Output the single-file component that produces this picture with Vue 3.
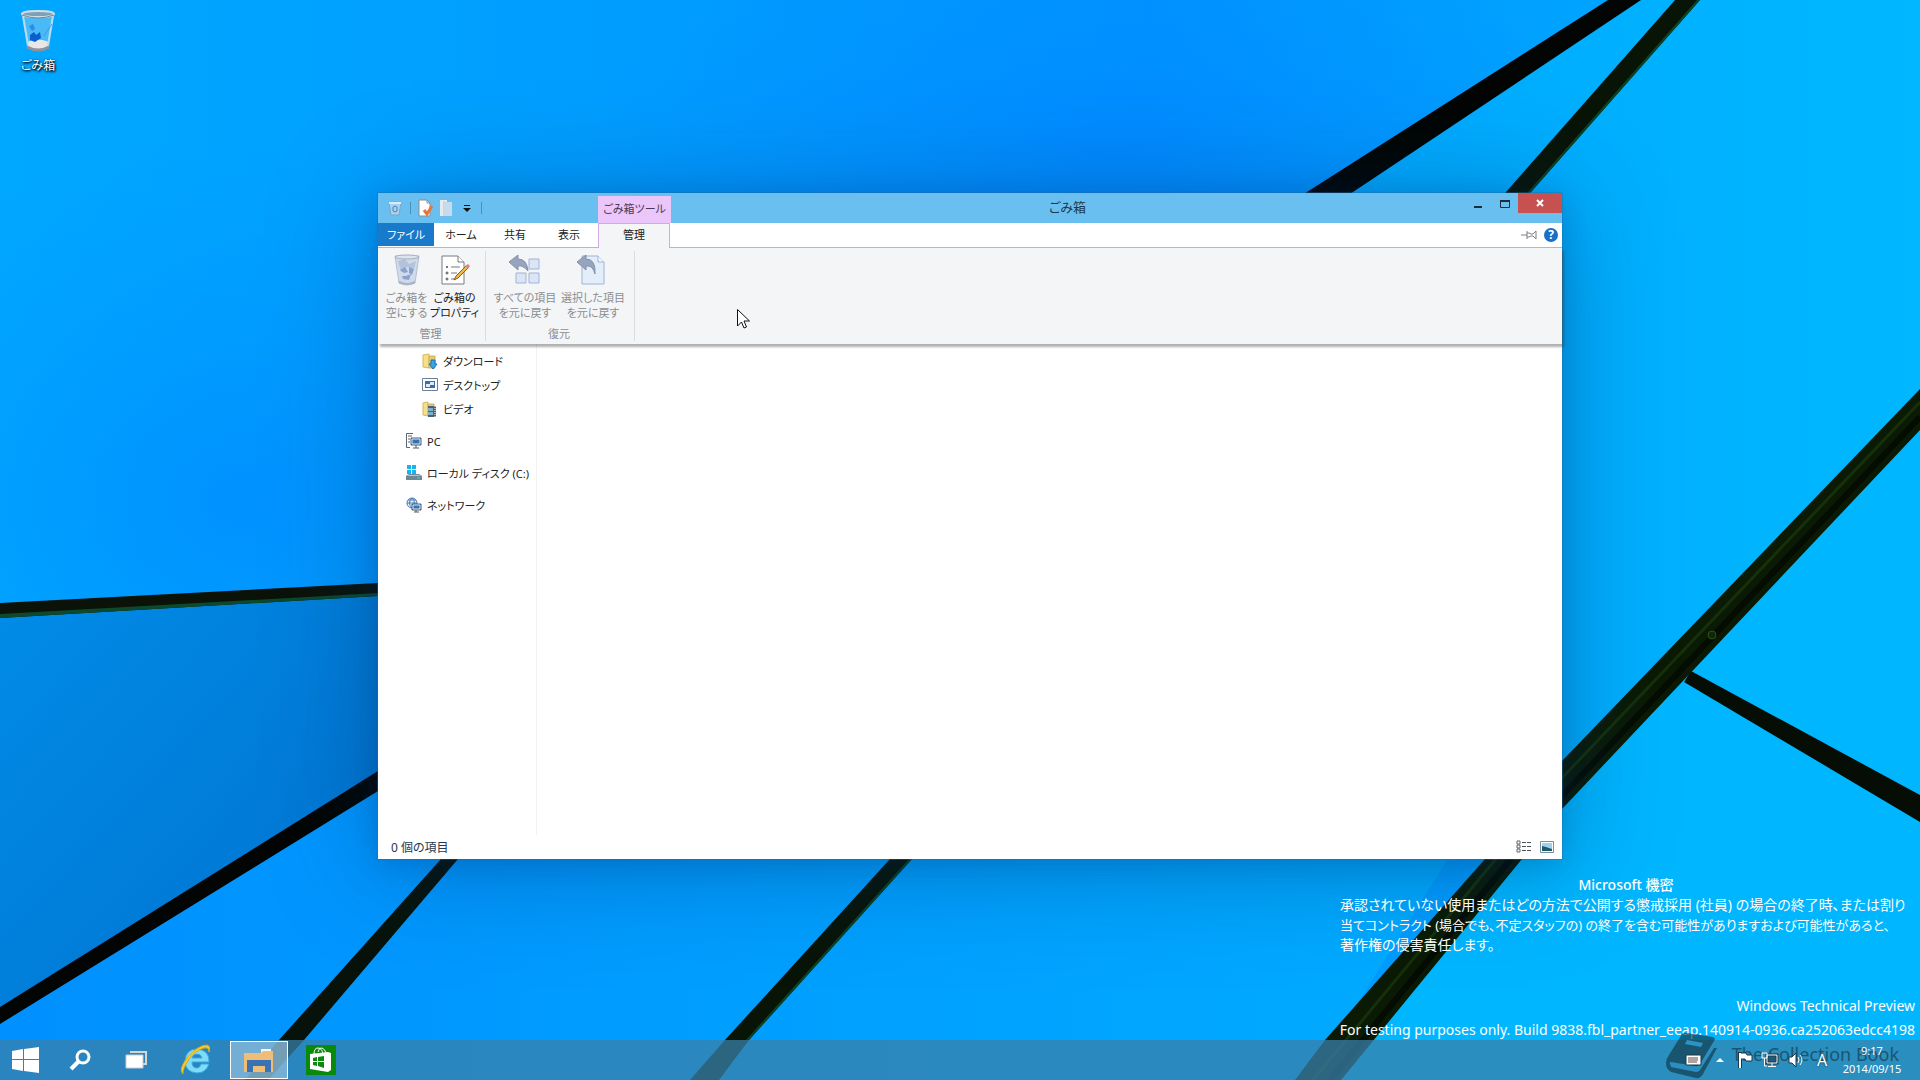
<script setup>
const tabs = ['ホーム', '共有', '表示']
const notice = [
  { text: '承認されていない使用またはどの方法で公開する懲戒採用 (社員) の場合の終了時、または割り' },
  { text: '当てコントラクト (場合でも、不定スタッフの) の終了を含む可能性がありますおよび可能性があると、', dense: true },
  { text: '著作権の侵害責任します。' },
]
</script>

<template>
  <div class="desktop">
    <svg class="wallpaper" viewBox="0 0 1920 1080" preserveAspectRatio="xMidYMid slice" aria-hidden="true">
      <defs>
        <linearGradient id="base" x1="0" y1="0" x2="1" y2="0">
          <stop offset="0" stop-color="#00a8ff" />
          <stop offset=".3" stop-color="#009eff" />
          <stop offset=".6" stop-color="#0092ff" />
          <stop offset=".78" stop-color="#00a0ff" />
          <stop offset="1" stop-color="#00b0ff" />
        </linearGradient>
        <linearGradient id="leftPane" x1="0" y1="0" x2="1" y2="1">
          <stop offset="0" stop-color="#008ce8" />
          <stop offset="1" stop-color="#0070cc" />
        </linearGradient>
        <linearGradient id="lowPane" x1="0" y1="0" x2="1" y2="0">
          <stop offset="0" stop-color="#0090ff" />
          <stop offset=".4" stop-color="#009cff" />
          <stop offset="1" stop-color="#00acff" />
        </linearGradient>
        <linearGradient id="rightPane" x1="0" y1="0" x2="1" y2="0">
          <stop offset="0" stop-color="#00a8ff" />
          <stop offset="1" stop-color="#00b8ff" />
        </linearGradient>
        <radialGradient id="glow">
          <stop offset="0" stop-color="#0086ff" stop-opacity=".6" />
          <stop offset="1" stop-color="#0090ff" stop-opacity="0" />
        </radialGradient>
      </defs>
      <rect width="1920" height="1080" fill="url(#base)" />
      <ellipse cx="1100" cy="150" rx="520" ry="220" fill="url(#glow)" />
      <ellipse cx="240" cy="500" rx="460" ry="360" fill="url(#glow)" />
      <path d="M0 610 400 590V775L0 1024Z" fill="url(#leftPane)" />
      <path d="M0 1024 400 775H1500L1310 1080H0Z" fill="url(#lowPane)" />
      <path d="M1625 0H1920V400L1500 860H1400L1320 193Z" fill="url(#rightPane)" />
      <path d="M1920 410V1080H1318L1580 770Z" fill="#00b6ff" />
      <path d="M0 603 378 583 400 582V595L378 596 0 618Z" fill="#0b1208" />
      <path d="M0 614 378 593V596L0 618Z" fill="#0b4a2c" />
      <path d="M1608 0H1641L1353 192 378 791 0 1024V1007L378 771 1307 192Z" fill="#020503" />
      <path d="M1675 0H1700L1531 192 912 859 749 1040 719 1080H690L725 1040 890 859 1506 192Z" fill="#081406" />
      <path d="M1697 0H1700L1531 192 912 859 749 1040H746L909 859 1528 192Z" fill="#0b4426" />
      <path d="M441 859 520 775H538L458 859 304 1040 268 1080H245L279 1040Z" fill="#07130a" />
      <path d="M1691 671 1920 795V822L1684 682Z" fill="#050d04" />
      <path d="M1920 389V430L1562 809 1522 859 1341 1080H1295L1325 1040 1485 859 1562 761Z" fill="#0a1a04" />
      <path d="M1920 402 1562 778 1495 860 1313 1080" fill="none" stroke="#16300a" stroke-width="3" />
      <path d="M1920 417 1562 796 1510 860 1330 1080" fill="none" stroke="#050c02" stroke-width="6" />
      <circle cx="1712" cy="635" r="4" fill="#102808" stroke="#2c5018" />
    </svg>

    <a class="bin" href="#bin">
      <svg width="40" height="46" viewBox="0 0 40 46" aria-hidden="true">
        <path d="M4 5 9 40q11 6 22 0l5-35Z" fill="#7cc6f2" fill-opacity=".6" />
        <path d="M9 34q11-5 22 0l-1 6q-10 5-20 0Z" fill="#e9e6ea" />
        <path d="M9 39q11 6 22 0" fill="none" stroke="#8d929d" stroke-width="3" />
        <path d="M5 8 10 37M35 8 30 37" stroke="#b7dcf4" stroke-width="2" />
        <path d="m11 18 4-2 2 5-3 2Z" fill="#2f8ae6" />
        <path d="m12 27 4-3 2 3 4-3 1 6-6 4-5-2Z" fill="#0a5fd0" />
        <path d="m26 28 8-12" stroke="#3f9be4" />
        <ellipse cx="20" cy="6" rx="16" ry="3" fill="#7d9fb8" stroke="#d4dde3" stroke-width="2" />
        <path d="M4 7q16 6 32 0" fill="none" stroke="#6f8796" />
      </svg>
      <span>ごみ箱</span>
    </a>

    <main class="stage">
      <section class="window">
        <header class="titlebar">
          <div class="quick">
            <svg width="16" height="16" viewBox="0 0 16 16" aria-hidden="true"><path d="m2 2 2 13h8l2-13Z" fill="#a8d2ee" stroke="#7ca6c4" /><path d="M2 3h12" stroke="#dcecf6" stroke-width="2" /><path d="M6 7q2-2 4 0v4q-2 2-4 0Z" fill="none" stroke="#3d83c4" /></svg>
            <i class="bar"></i>
            <button aria-label="プロパティ"><svg width="16" height="18" viewBox="0 0 16 18"><path d="M2 1h8l3 3v13H2Z" fill="#fff" stroke="#8a8f94" /><path d="M10 1v3h3" fill="none" stroke="#8a8f94" /><path d="m7 11 3 4 5-8" fill="none" stroke="#e8743c" stroke-width="3" /></svg></button>
            <button aria-label="新しいフォルダー"><svg width="14" height="18" viewBox="0 0 14 18"><path d="M1 1h7v16H1Z" fill="#e4eaf0" /><path d="M6 3h7v14H6Z" fill="#c4dcee" /><path d="M5 2v15" stroke="#b4c4d2" /></svg></button>
            <button aria-label="カスタマイズ"><svg width="8" height="8" viewBox="0 0 8 8"><path d="M1 1.500h6" stroke="#111" /><path d="M0 4h8L4 8Z" fill="#111" /></svg></button>
            <i class="bar"></i>
          </div>
          <div class="context">ごみ箱ツール</div>
          <h1>ごみ箱</h1>
          <div class="controls">
            <button aria-label="最小化"><svg width="10" height="10" viewBox="0 0 10 10"><path d="M1 8h8" stroke="#1c2c38" stroke-width="2" /></svg></button>
            <button aria-label="最大化"><svg width="10" height="10" viewBox="0 0 10 10"><path d="M0 2h10" stroke="#1c2c38" stroke-width="2" /><path d="M.5 1.500v7h9v-7" fill="none" stroke="#1c2c38" /></svg></button>
            <button class="close" aria-label="閉じる"><svg width="10" height="8" viewBox="0 0 10 8"><path d="m2 1 6 6M8 1 2 7" stroke="#fff" stroke-width="2" /></svg></button>
          </div>
        </header>

        <nav class="tabs">
          <button class="file">ファイル</button>
          <button v-for="t in tabs" :key="t" class="tab">{{ t }}</button>
          <button class="active">管理</button>
          <span class="grow"></span>
          <button class="tool" aria-label="リボンの固定"><svg width="16" height="10" viewBox="0 0 16 10"><path d="M0 5h6M6 1v8M6 3h2l2 1h2l3-3v8l-3-3h-2L8 7H6" fill="none" stroke="#7b7f84" /></svg></button>
          <button class="tool" aria-label="ヘルプ"><span class="help">?</span></button>
        </nav>

        <div class="ribbon">
          <div class="group manage">
            <div class="actions">
              <button class="off">
                <svg width="32" height="32" viewBox="0 0 32 32" aria-hidden="true"><path d="m4 2 4 27q8 4 16 0l4-27Z" fill="#cfdaea" stroke="#b4c0d2" /><path d="m7 7 7-2 4 5 7-3-2 8-7-2-6 5Z" fill="#b4c3dc" /><path d="m9 16 5-3 3 5-4 1ZM18 13l5 2-2 6-3-2ZM11 22l4 0 5-2-2 6-6-1Z" fill="#8ba2cc" /><ellipse cx="16" cy="3" rx="12" ry="2" fill="#dde4ee" stroke="#a3afc0" /><path d="M8 28q8 4 16 0" fill="none" stroke="#a9b4c6" stroke-width="2" /></svg>
                <span>ごみ箱を<br>空にする</span>
              </button>
              <button>
                <svg width="32" height="32" viewBox="0 0 32 32" aria-hidden="true"><path d="M3 2h16l6 6v22H3Z" fill="#fff" stroke="#777c82" /><path d="M19 2v6h6" fill="#fff" stroke="#777c82" /><path d="M12 13h9M12 19h6M12 25h5" stroke="#777c82" /><circle cx="8" cy="13" r="1" fill="#454b52" /><circle cx="8" cy="19" r="1" fill="none" stroke="#454b52" /><circle cx="8" cy="25" r="1" fill="none" stroke="#454b52" /><path d="m27 12-10 10-2 4 4-2 10-10Z" fill="#f4b63f" stroke="#8a6222" /><path d="m26 12 3-2 2 2-2 3Z" fill="#d98a7c" /></svg>
                <span>ごみ箱の<br>プロパティ</span>
              </button>
            </div>
            <p>管理</p>
          </div>
          <div class="group restore">
            <div class="actions">
              <button class="off">
                <svg width="32" height="32" viewBox="0 0 32 32" aria-hidden="true"><g fill="#dbe6f5" stroke="#9eb4d4"><path d="M20 5h10v10H20ZM7 19h10v10H7ZM20 19h10v10H20Z" /></g><path d="m0 8 9-7v4q9 0 10 12Q14 11 9 12v4Z" fill="#96a5bd" stroke="#8292aa" /></svg>
                <span>すべての項目<br>を元に戻す</span>
              </button>
              <button class="off">
                <svg width="32" height="32" viewBox="0 0 32 32" aria-hidden="true"><path d="M5 2h16l6 6v22H5Z" fill="#e4eefb" stroke="#9eb4d4" /><path d="M21 2v6h6" fill="#f4f8fd" stroke="#9eb4d4" /><path d="m0 8 9-7v4q10 0 9 15Q16 11 9 12v4Z" fill="#96a5bd" stroke="#8292aa" /></svg>
                <span>選択した項目<br>を元に戻す</span>
              </button>
            </div>
            <p>復元</p>
          </div>
        </div>

        <div class="body">
          <aside>
            <a class="sub" href="#downloads"><svg width="16" height="16" viewBox="0 0 16 16"><path d="M1 2 7 1v14l-6-1Z" fill="#f6df8c" stroke="#d6b85c" /><path d="M7 3h6v12H7Z" fill="#e9cb6c" stroke="#d0b055" /><path d="M9 7h4v4h2l-4 5-4-5h2Z" fill="#38a4ea" stroke="#1470b8" /></svg>ダウンロード</a>
            <a class="sub" href="#desktop"><svg width="16" height="16" viewBox="0 0 16 16"><path d="M.5 1.500h15v12H.5Z" fill="#fff" stroke="#67809c" /><path d="M3 4h10v7H3Z" fill="#3c6ea4" /><path d="M4 7h4v3H4ZM8 5h4v3H8Z" fill="#dcebf8" /></svg>デスクトップ</a>
            <a class="sub" href="#videos"><svg width="16" height="16" viewBox="0 0 16 16"><path d="M1 2 6 1v14l-5-1Z" fill="#f6df8c" stroke="#d6b85c" /><path d="M6 3h6v12H6Z" fill="#e9cb6c" stroke="#d0b055" /><path d="M6 5h8v11H6Z" fill="#4b6272" /><path d="M6 7h5v3H6ZM6 11h5v3H6Z" fill="#7fb0c8" /><path d="M13 5v11" stroke="#fff" stroke-dasharray="1 1" /></svg>ビデオ</a>
            <a class="root" href="#pc"><svg width="16" height="16" viewBox="0 0 16 16"><path d="M7 .5H.5v14H4M2 3h4M2 6h2M2 9h2" fill="none" stroke="#5a6570" /><path d="M5 5h10v7H5Z" fill="#3a70b0" stroke="#4e5d6c" /><path d="M6 6h8v5H6Z" fill="none" stroke="#dce8f4" /><path d="M10 12v3M7 15h6" stroke="#4e5d6c" /></svg>PC</a>
            <a class="root" href="#c"><svg width="16" height="16" viewBox="0 0 16 16"><path d="M1 0h4v4H1ZM6 0h4v4H6ZM1 5h4v4H1ZM6 5h4v4H6Z" fill="#14b4ec" /><path d="m0 11 3-2h10l3 2v4H0Z" fill="#6d8798" /><path d="m1 11 2-1h10l2 1Z" fill="#b4c6d0" /><path d="M11 13h3" stroke="#54d888" /></svg>ローカル ディスク (C:)</a>
            <a class="root" href="#network"><svg width="16" height="16" viewBox="0 0 16 16"><circle cx="6" cy="6" r="5" fill="#e6f0fa" stroke="#4a7cb4" /><path d="M1 6h10M6 1q-5 5 0 10M6 1q5 5 0 10M2 3h8" fill="none" stroke="#4a7cb4" /><path d="M6 7h9v6H6Z" fill="#3a70b0" stroke="#4e5d6c" /><path d="M7 8h7v4H7Z" fill="none" stroke="#dce8f4" /><path d="M10 13v2M8 15h5" stroke="#4e5d6c" /></svg>ネットワーク</a>
          </aside>
          <div class="files"></div>
        </div>

        <footer class="status">
          <span>0 個の項目</span>
          <div>
            <button aria-label="詳細"><svg width="16" height="14" viewBox="0 0 16 14"><path d="M1 1h3v3H1ZM1 5h3v3H1ZM1 9h3v3H1Z" fill="#fff" stroke="#5c6670" /><path d="M6 2.500h9M6 6.500h9M6 10.500h9" stroke="#44505c" stroke-dasharray="4 1" /></svg></button>
            <button aria-label="大アイコン"><svg width="14" height="12" viewBox="0 0 14 12"><path d="M.5.5h13v11H.5Z" fill="#fff" stroke="#7390a8" /><path d="M2 2h10v8H2Z" fill="#9fd2ea" /><path d="m2 5 4 1 6 2v2H2Z" fill="#1e5a68" /></svg></button>
          </div>
        </footer>
      </section>
    </main>

    <svg class="cursor" width="14" height="20" viewBox="0 0 14 20" aria-hidden="true"><path d="M.5.5v16.500l4-4 2.500 6 2.500-1-2.500-6h5.500Z" fill="#fff" stroke="#111" /></svg>

    <div class="confidential">
      <strong>Microsoft 機密</strong>
      <span v-for="line in notice" :key="line.text" :class="{ dense: line.dense }">{{ line.text }}</span>
    </div>
    <div class="build">
      <span>Windows Technical Preview</span>
      <span>For testing purposes only. Build 9838.fbl_partner_eeap.140914-0936.ca252063edcc4198</span>
    </div>

    <footer class="taskbar">
      <button class="start" aria-label="スタート"><svg width="28" height="26" viewBox="0 0 28 26"><path d="m0 4 11-2v10H0ZM12 2l15-2v12H12ZM0 13h11v11L0 22ZM12 13h15v13l-15-2Z" fill="#fff" /></svg></button>
      <button class="mid" aria-label="検索"><svg width="22" height="22" viewBox="0 0 22 22"><circle cx="14" cy="8" r="6" fill="none" stroke="#fff" stroke-width="3" /><path d="m10 12-8 8" stroke="#fff" stroke-width="4" /></svg></button>
      <button class="mid" aria-label="タスク ビュー"><svg width="22" height="18" viewBox="0 0 22 18"><path d="M5 1h16v12h-3" fill="none" stroke="#d8d4d2" stroke-width="2" /><path d="M1 4h17v13H1Z" fill="#fff" stroke="#c9cdd0" /></svg></button>
      <button class="ie" aria-label="Internet Explorer"><svg width="32" height="32" viewBox="0 0 32 32"><path d="M21 20h8q-3 9-12 9Q5 28 5 17 6 5 17 5q12 1 12 12v1H12q0 6 5 6 3 0 4-4ZM12 14h10q-1-4-5-4t-5 4Z" fill="#7ddcfa" stroke="#3aa9dc" fill-rule="evenodd" /><path d="M3 30Q-2 26 7 14 18 1 27 1q4 1 2 7 0-5-5-4-8 2-15 11Q2 26 3 30Z" fill="#f6cf2c" stroke="#dca814" /></svg></button>
      <button class="explorer" aria-label="エクスプローラー"><svg width="32" height="28" viewBox="0 0 32 28"><path d="M18 3h10v6H18Z" fill="#fbf7f0" /><path d="M1 7h17l2-2h10v21H1Z" fill="#eebd78" /><path d="M4 14h24v12h-6v-6H10v6H4Z" fill="#3a72b4" /><path d="M11 21h10v5H11Z" fill="#f0bd74" /></svg></button>
      <button class="store" aria-label="ストア"><svg width="30" height="30" viewBox="0 0 30 30"><path d="M0 0h30v30H0Z" fill="#0a8a0a" /><path d="m4 9 18-2 3 1v17l-3 2-18-3Z" fill="#fff" /><path d="M8 9q0-6 4-6t5 6M12 7q1-5 4-4t4 5" fill="none" stroke="#fff" /><path d="m7 13 4-1v4H7ZM12 12l6-1v5h-6ZM7 17h4v4l-4-1ZM12 17h6v6l-6-2Z" fill="#0a8a0a" /></svg></button>
      <span class="grow"></span>
      <div class="tray">
        <svg width="24" height="14" viewBox="0 0 24 14" aria-hidden="true"><path d="M3 2h15v10H3Z" fill="#fff" stroke="#1c3846" /><path d="M5 5h10M5 9h9M5 7h10" stroke="#5b4842" /></svg>
        <svg width="12" height="6" viewBox="0 0 12 6" aria-hidden="true"><path d="m1 5 4-4 4 4Z" fill="#fff" /></svg>
        <svg width="18" height="18" viewBox="0 0 18 18" aria-hidden="true"><path d="M5 1v16" stroke="#1c3846" stroke-width="4" /><path d="M5 2h6l1 2h5v6h-6l-1-2H5Z" fill="#fff" stroke="#1c3846" /><path d="M5 2v15" stroke="#fff" stroke-width="2" /></svg>
        <svg width="18" height="18" viewBox="0 0 18 18" aria-hidden="true"><path d="M6 4h10v8H6Z" fill="#1c5c78" stroke="#1c3846" stroke-width="3" /><path d="M6 4h10v8H6ZM11 12v3M7 15.500h8M1 2h5v5H1ZM3.500 7v8H6" fill="none" stroke="#fff" /></svg>
        <svg width="18" height="16" viewBox="0 0 18 16" aria-hidden="true"><path d="M2 5h3l4-4v14l-4-4H2Z" fill="#fff" stroke="#1c3846" /><path d="M11 5q2 3 0 6M13 3q4 5 0 10" fill="none" stroke="#fff" /></svg>
        <span class="ime">A</span>
        <time datetime="2014-09-15T09:17"><span>9:17</span><span>2014/09/15</span></time>
      </div>
    </footer>

    <div class="credit">
      <svg width="52" height="48" viewBox="0 0 52 48" aria-hidden="true"><path d="M16 2q2-2 5-1l26 4q3 1 1 4L34 32q-2 3-5 2L5 30q-2 0-1 2l1 3 25 5q3 0 4-2L48 16h3L37 42q-3 5-7 4L5 40q-5-3-5-9 0-4 3-8Z" fill="#123847" /><path d="m21 8 16 3-2 4-16-3Z" fill="#2b98c8" /></svg>
      <span>The Collection Book</span>
    </div>
  </div>
</template>

<style>
body { margin: 0; }
</style>

<style scoped>
.desktop {
  position: relative;
  display: flex;
  flex-direction: column;
  min-height: 100vh;
  overflow: hidden;
  font-family: "Noto Sans", "Noto Sans CJK JP", sans-serif;
  font-size: 12px;
  font-feature-settings: "palt";
  color: #222;
}
button {
  display: flex;
  align-items: center;
  justify-content: center;
  margin: 0;
  padding: 0;
  border: 0;
  background: none;
  color: inherit;
  font: inherit;
}
a { color: inherit; text-decoration: none; }
svg { display: block; flex: none; }
p, h1 { margin: 0; }
.grow { flex: 1; }
.wallpaper { position: absolute; inset: 0; width: 100%; height: 100%; }

.bin {
  position: absolute;
  top: 8px;
  left: 0;
  width: 76px;
  display: flex;
  flex-direction: column;
  align-items: center;
  color: #fff;
  line-height: 16px;
  text-shadow: 1px 1px 2px #000, 0 1px 3px #000;
}
.bin span { padding-top: 4px; }

.stage {
  position: relative;
  flex: 1;
  display: grid;
  grid-template-columns: 378fr 1184fr 358fr;
  grid-template-rows: 193fr 666fr 181fr;
}
.window {
  grid-area: 2 / 2;
  display: flex;
  flex-direction: column;
  background: #fff;
  box-shadow: 0 0 0 1px rgba(30, 110, 170, .4), 0 4px 24px rgba(0, 30, 80, .15), 0 8px 100px rgba(0, 50, 110, .4);
}
.titlebar { display: flex; height: 30px; background: #69c0f0; }
.quick { box-sizing: border-box; width: 220px; display: flex; align-items: center; gap: 7px; padding-left: 9px; }
.quick button { width: 14px; }
.bar { width: 1px; height: 12px; background: #4a8fb8; }
.context {
  width: 73px;
  height: 27px;
  margin-top: 3px;
  background: #ebc6fb;
  color: #4a3a52;
  font-size: 11px;
  line-height: 26px;
  text-align: center;
}
.titlebar h1 { flex: 1; color: #1c3a4c; font-size: 13px; font-weight: 400; line-height: 28px; text-align: center; }
.controls { display: flex; }
.controls button { width: 27px; height: 22px; }
.controls .close { width: 44px; height: 20px; background: #c75050; }

.tabs { display: flex; height: 24px; border-bottom: 1px solid #c9a8dc; font-size: 11px; }
.tabs button { box-sizing: border-box; }
.file, .tab { height: 23px; padding-bottom: 2px; }
.file { width: 56px; background: #1979ca; color: #fff; }
.tab { width: 54px; }
.active {
  width: 72px;
  height: 25px;
  margin: 0 0 -1px 2px;
  padding-bottom: 4px;
  border: 1px solid #d2a8e8;
  border-bottom: 0;
  background: #f4f5f7;
}
.tool { width: 22px; }
.help { width: 14px; height: 14px; border-radius: 50%; background: #1a70c8; color: #fff; font-size: 12px; font-weight: 700; line-height: 14px; }

.ribbon {
  position: relative;
  display: flex;
  height: 96px;
  background: #f4f5f7;
  font-size: 11px;
  box-shadow: 2px 3px 2px rgba(60, 60, 60, .4);
}
.group { box-sizing: border-box; margin: 3px 0; padding-right: 2px; border-right: 1px solid #dcdde0; }
.manage { width: 108px; }
.restore { width: 149px; }
.actions { display: flex; justify-content: center; height: 72px; }
.actions button { flex-direction: column; justify-content: flex-start; gap: 4px; line-height: 15px; white-space: nowrap; }
.actions svg { margin-top: 3px; }
.manage button { width: 48px; }
.restore button { width: 68px; }
.off, .group p { color: #8b8d91; }
.group p { line-height: 22px; text-align: center; }

.body { flex: 1; display: flex; }
aside { box-sizing: border-box; width: 159px; padding-top: 5px; border-right: 1px solid #f2f2f2; }
aside a { display: flex; align-items: center; gap: 5px; height: 24px; font-size: 11px; white-space: nowrap; }
.sub { padding-left: 44px; }
.root { padding-left: 28px; margin-top: 8px; }
.files { flex: 1; }
.status { display: flex; justify-content: space-between; align-items: center; height: 24px; padding: 0 8px 0 13px; color: #26384e; }
.status div { display: flex; gap: 8px; align-items: center; }

.cursor { position: absolute; left: 737px; top: 309px; }

.confidential, .build { position: absolute; color: #fff; display: flex; flex-direction: column; line-height: 20px; white-space: nowrap; }
.confidential { right: 8px; bottom: 125px; width: 572px; font-size: 14px; }
.confidential strong { text-align: center; font-weight: 500; }
.confidential .dense { font-size: 13px; }
.build { right: 5px; bottom: 38px; text-align: right; line-height: 24px; font-size: 14px; }

.taskbar { position: relative; display: flex; height: 40px; background: rgba(56, 128, 170, .75); }
.start { width: 52px; }
.mid { width: 56px; }
.ie { width: 64px; }
.explorer { box-sizing: border-box; width: 58px; margin: 1px 2px; border: 1px solid #fff; background: rgba(190, 215, 235, .5); }
.store { width: 62px; }
.tray { z-index: 1; display: flex; align-items: center; gap: 8px; color: #fff; }
.ime { width: 18px; font-size: 16px; text-align: center; text-shadow: 0 0 2px #123; }
.tray time { width: 66px; margin-right: 15px; display: flex; flex-direction: column; font-size: 11px; line-height: 18px; text-align: center; }

.credit { position: absolute; right: 21px; bottom: 0; display: flex; gap: 14px; opacity: .65; color: #123847; font-size: 18px; line-height: 44px; pointer-events: none; }
</style>
